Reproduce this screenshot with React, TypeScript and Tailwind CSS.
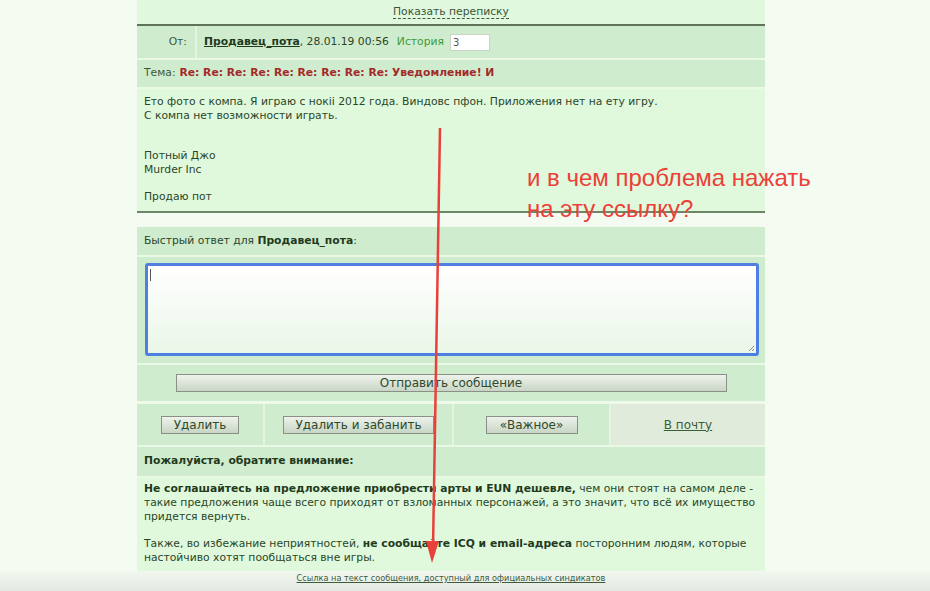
import React from "react";

const sep = "h-[2px] bg-[#e9f9e6]";

function Btn({ children, className = "" }: { children: React.ReactNode; className?: string }) {
  return (
    <button
      className={
        "h-[18px] border border-[#8a8f88] bg-gradient-to-b from-[#eef3ec] to-[#c8d5c4] text-[12px] leading-[16px] text-[#2e4a2c] " +
        className
      }
    >
      {children}
    </button>
  );
}

export default function App() {
  return (
    <div
      className="relative w-[930px] h-[591px] overflow-hidden bg-[#f4fcf2]"
      style={{ fontFamily: '"DejaVu Sans", Verdana, sans-serif' }}
    >
      <div className="ml-[137px] w-[628px] flex flex-col text-[10.75px] text-[#2a4628]">
        {/* top */}
        <div className="h-[24px] bg-[#e0f8dd] flex items-center justify-center">
          <span className="border-b border-dashed border-[#3d5a3a] leading-[12px] text-[#3a5538]">Показать переписку</span>
        </div>
        <div className="h-[2px] bg-[#5e7359]" />
        {/* from */}
        <div className="h-[32px] bg-[#d0ecce] flex">
          <div className="w-[58px] flex items-center justify-end pr-[8px] text-[#3c5a3a]">От:</div>
          <div className="w-[2px] bg-[#e3f5e0]" />
          <div className="flex items-center pl-[7px]">
            <span className="font-bold underline text-[#1f3a1d]">Продавец_пота</span>
            <span>, 28.01.19 00:56</span>
            <span className="ml-[8px] text-[#3f9a3a]">История</span>
            <span className="ml-[6px] w-[40px] h-[17px] bg-white border border-[#c8d4c6] text-[10px] leading-[15px] pl-[2px] text-[#555]">3</span>
          </div>
        </div>
        <div className={sep} />
        {/* subject */}
        <div className="h-[27px] bg-[#d0ecce] flex items-center pl-[7px]">
          <span className="text-[#3c5a3a]">Тема:</span>
          <span className="ml-[4px] font-bold text-[#a32a2a]">Re: Re: Re: Re: Re: Re: Re: Re: Re: Уведомление! И</span>
        </div>
        <div className={sep} />
        {/* body */}
        <div className="h-[122px] bg-[#e0f9dc] pl-[7px] pt-[6px] leading-[13.5px]">
          Ето фото с компа. Я играю с нокii 2012 года. Виндовс пфон. Приложения нет на ету игру.
          <br />С компа нет возможности играть.
          <br />
          <br />
          <br />
          Потный Джо
          <br />
          Murder Inc
          <br />
          <br />
          Продаю пот
        </div>
        <div className="h-[2px] bg-[#6d8667]" />
        <div className="h-[14px]" />
        {/* quick reply */}
        <div className="h-[28px] bg-[#d0ecce] flex items-center pl-[7px]">
          Быстрый ответ для&nbsp;<span className="font-bold text-[#1f3a1d]">Продавец_пота</span>:
        </div>
        <div className={sep} />
        <div className="h-[106px] bg-[#d0ecce] pl-[8px] pt-[6px]">
          <div className="w-[614px] h-[93px] rounded-[3px] border-[3px] border-[#4f7fe0] bg-gradient-to-b from-white to-[#eaf6e8] relative">
            <div className="absolute left-[2px] top-[3px] w-[1px] h-[12px] bg-[#555]" />
            <svg className="absolute right-[1px] bottom-[1px]" width="7" height="7" viewBox="0 0 7 7">
              <path d="M6 1L1 6M6 4L4 6" stroke="#8a8a8a" strokeWidth="1" />
            </svg>
          </div>
        </div>
        <div className={sep} />
        {/* submit */}
        <div className="h-[36px] bg-[#d0ecce] flex items-center justify-center">
          <Btn className="w-[551px]">Отправить сообщение</Btn>
        </div>
        <div className="h-[3px] bg-[#eefbeb]" />
        {/* buttons row */}
        <div className="h-[41px] bg-[#d0ecce] flex">
          <div className="w-[126px] flex items-center justify-center">
            <Btn className="w-[78px]">Удалить</Btn>
          </div>
          <div className="w-[2px] bg-[#e3f5e0]" />
          <div className="w-[187px] flex items-center justify-center">
            <Btn className="w-[151px]">Удалить и забанить</Btn>
          </div>
          <div className="w-[2px] bg-[#e3f5e0]" />
          <div className="w-[155px] flex items-center justify-center">
            <Btn className="w-[92px]">«Важное»</Btn>
          </div>
          <div className="w-[2px] bg-[#e3f5e0]" />
          <div className="flex-1 bg-[#e0ebdc] flex items-center justify-center">
            <span className="underline text-[#3a5e36] text-[12px]">В почту</span>
          </div>
        </div>
        <div className={sep} />
        {/* attention */}
        <div className="h-[29px] bg-[#d0ecce] flex items-center pl-[7px] font-bold text-[#1f3a1d]">
          Пожалуйста, обратите внимание:
        </div>
        <div className={sep} />
        <div className="h-[93px] bg-[#e0f9dc] pl-[7px] pt-[4px] leading-[13.8px] whitespace-nowrap">
          <b className="text-[#1f3a1d]">Не соглашайтесь на предложение приобрести арты и EUN дешевле,</b> чем они стоят на самом деле -
          <br />
          такие предложения чаще всего приходят от взломанных персонажей, а это значит, что всё их имущество
          <br />
          придется вернуть.
          <br />
          <br />
          Также, во избежание неприятностей, <b className="text-[#1f3a1d]">не сообщайте ICQ и email-адреса</b> посторонним людям, которые
          <br />
          настойчиво хотят пообщаться вне игры.
        </div>
      </div>
      {/* footer */}
      <div className="h-[21px] bg-gradient-to-b from-[#f1f8ef] to-[#e3e7e2]">
        <div className="ml-[137px] w-[628px] flex justify-center pt-[1px]">
          <span className="text-[8.2px] underline text-[#3d5a3a] leading-[12px]">
            Ссылка на текст сообщения, доступный для официальных синдикатов
          </span>
        </div>
      </div>

      {/* annotation overlay */}
      <svg className="absolute left-0 top-0 pointer-events-none" width="930" height="591">
        <line x1="440" y1="128" x2="433" y2="548" stroke="#e8403a" strokeWidth="2.5" />
        <polygon points="426,541 439,541 432,563" fill="#e8403a" />
      </svg>
      <div
        className="absolute left-[527px] top-[162px] text-[24px] leading-[31px] text-[#ec4038]"
        style={{ fontFamily: '"Liberation Sans", Arial, sans-serif' }}
      >
        и в чем проблема нажать
        <br />
        на эту ссылку?
      </div>
    </div>
  );
}
